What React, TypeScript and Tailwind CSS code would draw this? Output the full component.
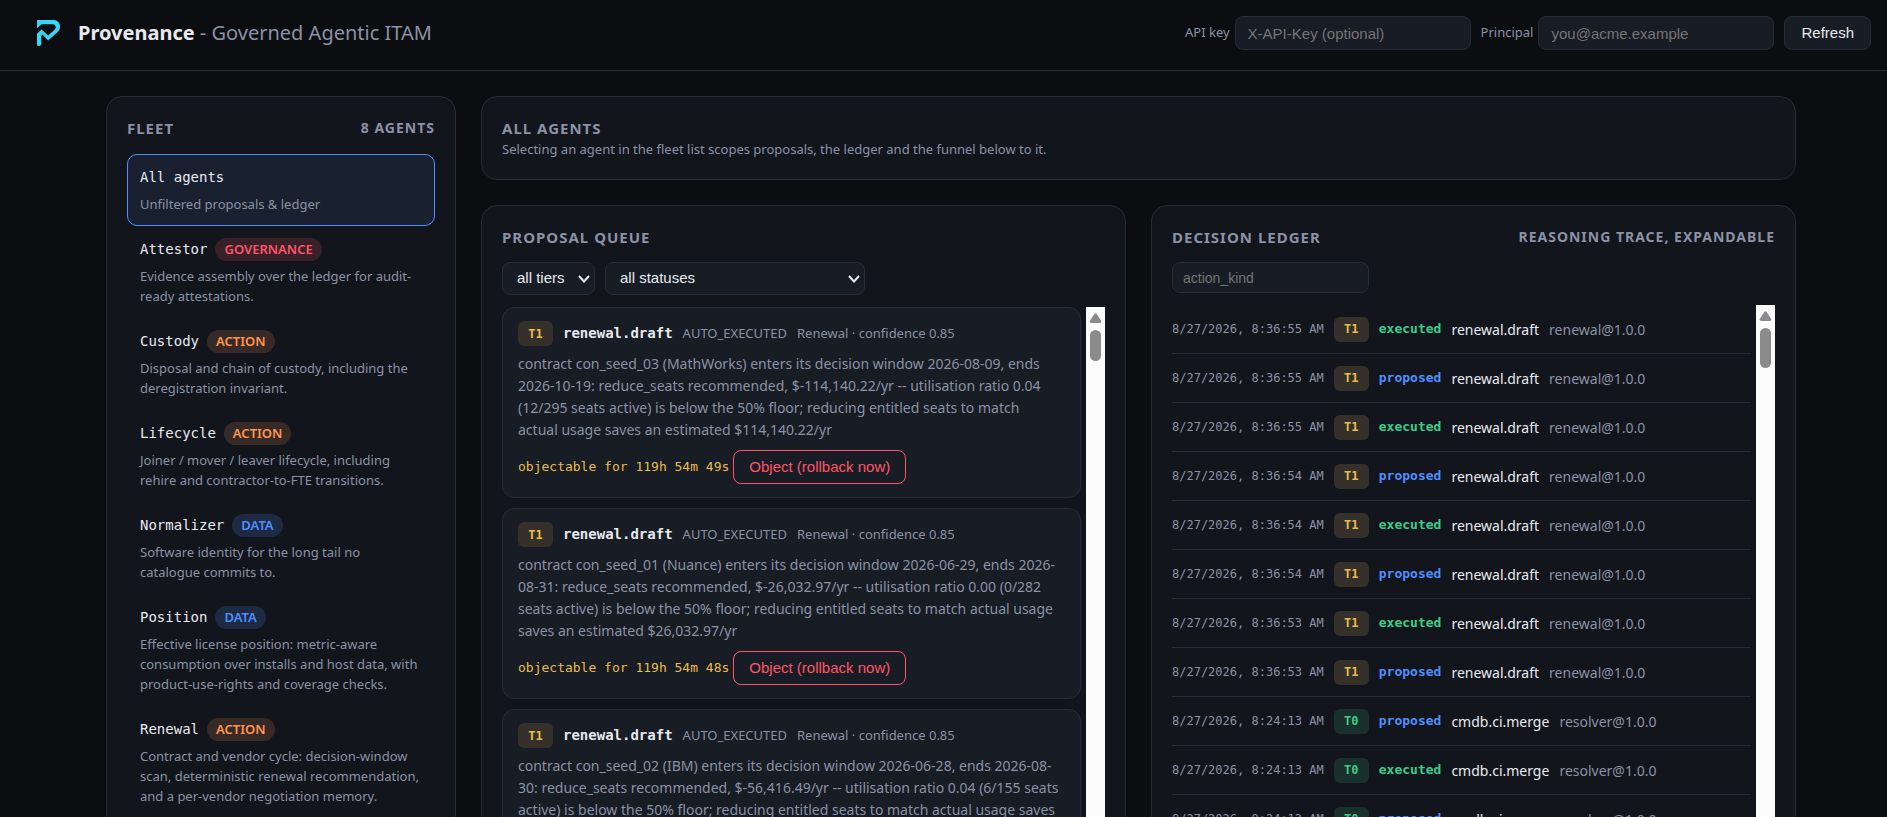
import React from 'react';

const agents = [
  { name: 'All agents', kind: '', text: 'Unfiltered proposals & ledger' },
  { name: 'Attestor', kind: 'GOVERNANCE', text: 'Evidence assembly over the ledger for audit-ready attestations.' },
  { name: 'Custody', kind: 'ACTION', text: 'Disposal and chain of custody, including the deregistration invariant.' },
  { name: 'Lifecycle', kind: 'ACTION', text: 'Joiner / mover / leaver lifecycle, including rehire and contractor-to-FTE transitions.' },
  { name: 'Normalizer', kind: 'DATA', text: 'Software identity for the long tail no catalogue commits to.' },
  { name: 'Position', kind: 'DATA', text: 'Effective license position: metric-aware consumption over installs and host data, with product-use-rights and coverage checks.' },
  { name: 'Renewal', kind: 'ACTION', text: 'Contract and vendor cycle: decision-window scan, deterministic renewal recommendation, and a per-vendor negotiation memory.' },
];

const proposals = [
  {
    id: 'con_seed_03',
    text: 'contract con_seed_03 (MathWorks) enters its decision window 2026-08-09, ends 2026-10-19: reduce_seats recommended, $-114,140.22/yr -- utilisation ratio 0.04 (12/295 seats active) is below the 50% floor; reducing entitled seats to match actual usage saves an estimated $114,140.22/yr',
    left: '119h 54m 49s',
  },
  {
    id: 'con_seed_01',
    text: 'contract con_seed_01 (Nuance) enters its decision window 2026-06-29, ends 2026-08-31: reduce_seats recommended, $-26,032.97/yr -- utilisation ratio 0.00 (0/282 seats active) is below the 50% floor; reducing entitled seats to match actual usage saves an estimated $26,032.97/yr',
    left: '119h 54m 48s',
  },
  {
    id: 'con_seed_02',
    text: 'contract con_seed_02 (IBM) enters its decision window 2026-06-28, ends 2026-08-30: reduce_seats recommended, $-56,416.49/yr -- utilisation ratio 0.04 (6/155 seats active) is below the 50% floor; reducing entitled seats to match actual usage saves',
    left: '119h 54m 48s',
  },
];

const ledger = [
  { time: '8:36:55', tier: 'T1', state: 'executed', action: 'renewal.draft', by: 'renewal@1.0.0' },
  { time: '8:36:55', tier: 'T1', state: 'proposed', action: 'renewal.draft', by: 'renewal@1.0.0' },
  { time: '8:36:55', tier: 'T1', state: 'executed', action: 'renewal.draft', by: 'renewal@1.0.0' },
  { time: '8:36:54', tier: 'T1', state: 'proposed', action: 'renewal.draft', by: 'renewal@1.0.0' },
  { time: '8:36:54', tier: 'T1', state: 'executed', action: 'renewal.draft', by: 'renewal@1.0.0' },
  { time: '8:36:54', tier: 'T1', state: 'proposed', action: 'renewal.draft', by: 'renewal@1.0.0' },
  { time: '8:36:53', tier: 'T1', state: 'executed', action: 'renewal.draft', by: 'renewal@1.0.0' },
  { time: '8:36:53', tier: 'T1', state: 'proposed', action: 'renewal.draft', by: 'renewal@1.0.0' },
  { time: '8:24:13', tier: 'T0', state: 'proposed', action: 'cmdb.ci.merge', by: 'resolver@1.0.0' },
  { time: '8:24:13', tier: 'T0', state: 'executed', action: 'cmdb.ci.merge', by: 'resolver@1.0.0' },
  { time: '8:24:13', tier: 'T0', state: 'proposed', action: 'cmdb.ci.merge', by: 'resolver@1.0.0' },
];

const mono = "font-['DejaVu_Sans_Mono',monospace]";
const arial = "font-['Liberation_Sans',sans-serif]";
const field = `${arial} rounded-lg border border-[#262b36] bg-[#181c24] text-[#e8eaf0] placeholder:text-[#757575]`;

const kindStyle: Record<string, string> = {
  GOVERNANCE: 'bg-[#382028] text-[#ff5468]',
  ACTION: 'bg-[#372a26] text-[#ff9550]',
  DATA: 'bg-[#1d2a43] text-[#4f8fff]',
};

function Title({ children }: { children: React.ReactNode }) {
  return <h2 className="text-[15px] leading-[22px] font-bold tracking-[1px]">{children}</h2>;
}

function Tier({ tier }: { tier: string }) {
  return (
    <span className={`${mono} w-[35px] h-[25px] shrink-0 rounded-md text-[12px] font-bold flex items-center justify-center ${tier === 'T1' ? 'bg-[#35312a] text-[#e8bd4e]' : 'bg-[#19302c] text-[#36cf8a]'}`}>
      {tier}
    </span>
  );
}

function ScrollBar({ thumb }: { thumb: string }) {
  return (
    <div className="w-[19px] shrink-0 self-stretch bg-[#fcfcfc] flex flex-col items-center pt-[6px]">
      <svg width="13" height="10" viewBox="0 0 13 10" fill="#8b8b8b">
        <path d="M5.4 0.8Q6.5 -0.5 7.6 0.8L12.2 8Q12.8 9.8 11 10H2Q0.2 9.8 0.8 8Z" />
      </svg>
      <div className={`w-[11px] rounded-full bg-[#8b8b8b] mt-[7px] ${thumb}`}></div>
    </div>
  );
}

function Header() {
  return (
    <header className="flex items-center justify-between border-b border-[#262b36] h-[71px] shrink-0 pl-[37px] pr-4 pb-1">
      <div className="flex items-center gap-[18px]">
        <svg width="23" height="26" viewBox="0 0 70 79" fill="#35d7f5">
          <path d="M0 0H50C72 0 76 26 62 37L34 62L17 44L13 48V74Q12 79 6 79Q0 79 0 76V42L14 29L34 47L54 29C60 22 56 13 48 13H14L0 25Z" />
        </svg>
        <h1 className="text-[20px] text-[#8b92a5]">
          <strong className="text-[#e8eaf0]">Provenance</strong> - Governed Agentic ITAM
        </h1>
      </div>
      <div className="flex items-center gap-[10px] text-[13px]">
        <label className="flex items-center gap-[5px]">
          API key
          <input className={`${field} text-[15px] w-[236px] h-[34px] px-3`} placeholder="X-API-Key (optional)" />
        </label>
        <label className="flex items-center gap-[5px]">
          Principal
          <input className={`${field} text-[15px] w-[236px] h-[34px] px-3`} placeholder="you@acme.example" />
        </label>
        <button className={`${field} text-[15px] h-[34px] px-4`}>Refresh</button>
      </div>
    </header>
  );
}

function Fleet() {
  return (
    <section className="w-[350px] shrink-0 rounded-2xl border border-[#262b36] bg-[#12151c] p-5">
      <div className="flex justify-between items-center mb-[15px]">
        <Title>FLEET</Title>
        <span className="text-[14px] leading-[22px] font-bold tracking-[1px]">8 AGENTS</span>
      </div>
      {agents.map((a, i) => (
        <button key={a.name} className={`block w-full text-left rounded-[10px] border px-3 py-[11px] ${i === 0 ? 'border-[#4f8fff] bg-[#192030]' : 'border-transparent'}`}>
          <span className="flex items-center gap-2 h-[23px]">
            <span className={`${mono} text-[14px] text-[#e8eaf0]`}>{a.name}</span>
            {a.kind && <span className={`h-[23px] leading-[23px] rounded-full px-[9px] text-[13px] font-semibold ${kindStyle[a.kind]}`}>{a.kind}</span>}
          </span>
          <span className="block mt-[5px] text-[13px] leading-5">{a.text}</span>
        </button>
      ))}
    </section>
  );
}

function Picker({ label, width }: { label: string; width: string }) {
  return (
    <div className={`relative ${width}`}>
      <select aria-label={label} className={`${field} text-[15px] w-full h-[33px] pl-[14px] appearance-none`}>
        <option>{label}</option>
      </select>
      <svg className="absolute right-[5px] top-[13px] pointer-events-none" width="12" height="8" viewBox="0 0 12 8" fill="none" stroke="#e8eaf0" strokeWidth="2">
        <path d="M1 1L6 6.500L11 1" />
      </svg>
    </div>
  );
}

function Queue() {
  return (
    <section className="flex-1 min-w-0 flex flex-col rounded-2xl border border-[#262b36] bg-[#12151c] p-5">
      <Title>PROPOSAL QUEUE</Title>
      <div className="flex gap-[10px] mt-[14px] mb-3">
        <Picker label="all tiers" width="w-[93px]" />
        <Picker label="all statuses" width="w-[260px]" />
      </div>
      <div className="flex gap-[5px] flex-1">
        <div className="flex-1 min-w-0 flex flex-col gap-[10px]">
          {proposals.map((p) => (
            <article key={p.id} className="rounded-xl border border-[#262b36] bg-[#181c24] pl-[15px] pr-5 py-[13px]">
              <div className="flex items-center gap-[10px] text-[13px]">
                <Tier tier="T1" />
                <strong className={`${mono} text-[14px] text-[#e8eaf0]`}>renewal.draft</strong>
                <span>AUTO_EXECUTED</span>
                <span>Renewal · confidence 0.85</span>
              </div>
              <p className="text-[14px] leading-[22px] mt-[7px] mb-[9px]">{p.text}</p>
              <div className="flex items-center gap-1">
                <span className={`${mono} text-[13px] text-[#e8bd4e]`}>objectable for {p.left}</span>
                <button className={`${arial} h-[34px] px-[15px] rounded-lg border border-[#ff5468] text-[15px] text-[#ff5468]`}>Object (rollback now)</button>
              </div>
            </article>
          ))}
        </div>
        <ScrollBar thumb="h-[31px]" />
      </div>
    </section>
  );
}

function Ledger() {
  return (
    <section className="flex-1 min-w-0 flex flex-col rounded-2xl border border-[#262b36] bg-[#12151c] p-5">
      <div className="flex justify-between items-center">
        <Title>DECISION LEDGER</Title>
        <span className="text-[14px] leading-[22px] font-bold tracking-[1px]">REASONING TRACE, EXPANDABLE</span>
      </div>
      <input aria-label="action_kind" className={`${field} text-[14px] w-[197px] h-[31px] px-[10px] mt-[14px] mb-3`} placeholder="action_kind" />
      <div className="flex gap-[5px] flex-1">
        <ul className="flex-1 min-w-0">
          {ledger.map((row, i) => (
            <li key={i} className="flex items-center gap-[10px] h-[49px] border-b border-[#262b36] text-[14px]">
              <time className={`${mono} text-[12px]`}>8/27/2026, {row.time} AM</time>
              <Tier tier={row.tier} />
              <span className={`${mono} text-[13px] font-bold ${row.state === 'executed' ? 'text-[#36cf8a]' : 'text-[#4f8fff]'}`}>{row.state}</span>
              <span className="text-[#e8eaf0]">{row.action}</span>
              <span>{row.by}</span>
            </li>
          ))}
        </ul>
        <ScrollBar thumb="h-[40px]" />
      </div>
    </section>
  );
}

export default function App() {
  return (
    <div className="h-screen overflow-hidden flex flex-col bg-[#0b0d11] text-[#8b92a5] font-['Noto_Sans',sans-serif]">
      <Header />
      <div className="pl-[15px] pt-[25px]">
        <main className="max-w-[1690px] mx-auto flex items-start gap-[25px]">
          <Fleet />
          <div className="flex-1 min-w-0 flex flex-col gap-[25px]">
            <section className="rounded-2xl border border-[#262b36] bg-[#12151c] p-5">
              <Title>ALL AGENTS</Title>
              <p className="text-[13px] leading-5">Selecting an agent in the fleet list scopes proposals, the ledger and the funnel below to it.</p>
            </section>
            <div className="flex gap-[25px]">
              <Queue />
              <Ledger />
            </div>
          </div>
        </main>
      </div>
    </div>
  );
}
